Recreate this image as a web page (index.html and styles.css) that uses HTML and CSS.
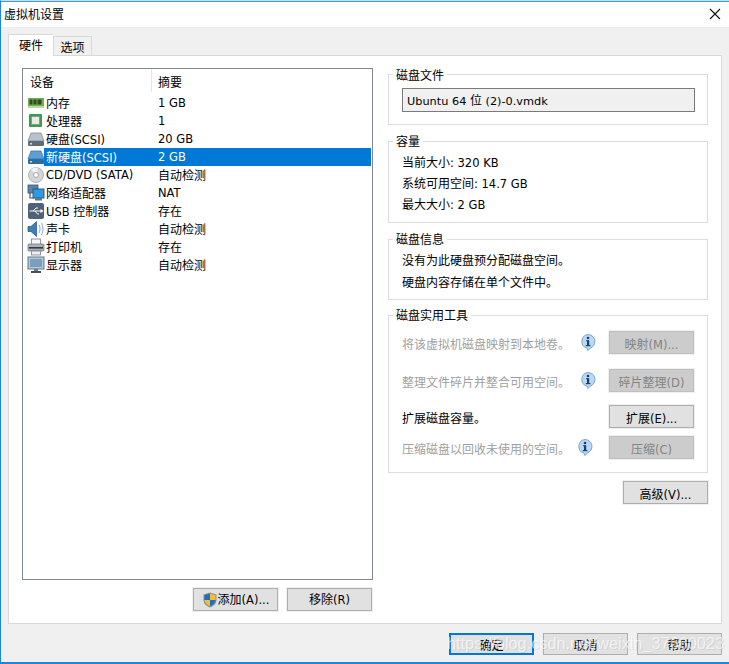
FILE: index.html
```html
<!DOCTYPE html>
<html lang="zh-CN">
<head>
<meta charset="utf-8">
<title>虚拟机设置</title>
<link rel="stylesheet" href="styles.css">
</head>
<body>
<div class="window">
  <div class="titlebar">
    <span class="title">虚拟机设置</span>
    <svg class="close" width="12" height="12" viewBox="0 0 12 12"><path d="M1 1l10 10M11 1L1 11" stroke="#111" stroke-width="1.1" fill="none"/></svg>
  </div>
  <div class="tabs">
    <div class="tab tab-active">硬件</div>
    <div class="tab">选项</div>
  </div>
  <div class="panel">
    <div class="left">
      <div class="list">
        <div class="list-head">
          <div class="col-a">设备</div>
          <div class="col-b">摘要</div>
        </div>
        <div class="row">
          <svg class="ico" width="18" height="18" viewBox="0 0 18 18"><rect x="1" y="4" width="16" height="9" fill="#6fb04a"/><rect x="1" y="12" width="16" height="2" fill="#b9d9a2"/><rect x="2.500" y="5.500" width="3" height="5" fill="#33472c"/><rect x="6.500" y="5.500" width="3" height="5" fill="#33472c"/><rect x="10.500" y="5.500" width="4" height="5" fill="#33472c"/></svg>
          <span class="name">内存</span><span class="val lat">1 GB</span>
        </div>
        <div class="row">
          <svg class="ico" width="18" height="18" viewBox="0 0 18 18"><rect x="2" y="2" width="13" height="13" rx="1" fill="#3f9a4f"/><rect x="4.500" y="4.500" width="8" height="8" fill="#e8ebe4" stroke="#7a8a7a" stroke-width=".6"/></svg>
          <span class="name">处理器</span><span class="val lat">1</span>
        </div>
        <div class="row">
          <svg class="ico" width="18" height="18" viewBox="0 0 18 18"><path d="M4 3h10l3 8H1z" fill="#b9c2ca" stroke="#76818c" stroke-width=".7"/><rect x="1" y="11" width="16" height="5" rx="1" fill="#5f6c78"/><rect x="3" y="13" width="2" height="1.500" fill="#cfe0ea"/></svg>
          <span class="name">硬盘<span class="lat">(SCSI)</span></span><span class="val lat">20 GB</span>
        </div>
        <div class="row row-selected">
          <svg class="ico" width="18" height="18" viewBox="0 0 18 18"><path d="M4 3h10l3 8H1z" fill="#5c9fd6" stroke="#2f6f9f" stroke-width=".7"/><rect x="1" y="11" width="16" height="5" rx="1" fill="#2d6c9c"/><rect x="3" y="13" width="2" height="1.500" fill="#bcd9ec"/></svg>
          <span class="name">新硬盘<span class="lat">(SCSI)</span></span><span class="val lat">2 GB</span>
        </div>
        <div class="row">
          <svg class="ico" width="18" height="18" viewBox="0 0 18 18"><circle cx="9" cy="9" r="7.500" fill="#d4d6d8" stroke="#a2a6aa" stroke-width=".8"/><path d="M9 9L4 3.500A7.500 7.500 0 0 1 11 1.800z" fill="#f2f3f4"/><circle cx="9" cy="9" r="2.500" fill="#fff" stroke="#8f9498" stroke-width=".8"/></svg>
          <span class="name lat">CD/DVD (SATA)</span><span class="val">自动检测</span>
        </div>
        <div class="row">
          <svg class="ico" width="18" height="18" viewBox="0 0 18 18"><rect x="1" y="1" width="10" height="8" fill="#5d82a8" stroke="#33587f" stroke-width=".8"/><path d="M3 9v5h4" fill="none" stroke="#33587f" stroke-width="1.200"/><rect x="6" y="5" width="11" height="9" fill="#2e9be0" stroke="#2d4f75" stroke-width=".9"/><rect x="8" y="14" width="7" height="2.500" fill="#5f7890"/></svg>
          <span class="name">网络适配器</span><span class="val lat">NAT</span>
        </div>
        <div class="row">
          <svg class="ico" width="18" height="18" viewBox="0 0 18 18"><rect x="1" y="1" width="16" height="16" rx="2" fill="#4f6378"/><path d="M2.500 9h13M6 9l3-3h2M8 9l2.500 3H12" fill="none" stroke="#fff" stroke-width="1"/><path d="M13.500 7l3 2-3 2z" fill="#fff"/></svg>
          <span class="name"><span class="lat">USB </span>控制器</span><span class="val">存在</span>
        </div>
        <div class="row">
          <svg class="ico" width="18" height="18" viewBox="0 0 18 18"><path d="M1 6.500h3L9.500 1.500v15L4 11.500H1z" fill="#3f7fb5" stroke="#1f4f7c" stroke-width=".7"/><path d="M12 5q2 4 0 8M14.500 3q3 6 0 12" fill="none" stroke="#9db8cf" stroke-width="1.200"/></svg>
          <span class="name">声卡</span><span class="val">自动检测</span>
        </div>
        <div class="row">
          <svg class="ico" width="18" height="18" viewBox="0 0 18 18"><rect x="4.500" y="1" width="9" height="6" fill="#f5f5f5" stroke="#7b8188" stroke-width=".8"/><rect x="1" y="6" width="16" height="7" rx="1" fill="#aab1b8" stroke="#6a7178" stroke-width=".7"/><rect x="2" y="9" width="14" height="1.600" fill="#333a40"/><rect x="15" y="7" width="1.500" height="1.500" fill="#5fc24f"/><rect x="4.500" y="13" width="9" height="4" fill="#eee" stroke="#7b8188" stroke-width=".8"/></svg>
          <span class="name">打印机</span><span class="val">存在</span>
        </div>
        <div class="row">
          <svg class="ico" width="18" height="18" viewBox="0 0 18 18"><rect x="1" y="1" width="16" height="12" fill="#b6c9d8" stroke="#56697c" stroke-width=".9"/><rect x="3" y="3" width="12" height="8" fill="#7d9fbe"/><rect x="7" y="13" width="4" height="2" fill="#6d7d8c"/><rect x="4" y="15" width="10" height="2" fill="#41505e"/></svg>
          <span class="name">显示器</span><span class="val">自动检测</span>
        </div>
      </div>
      <div class="left-actions">
        <button class="btn btn-add">
          <svg class="shield" width="16" height="16" viewBox="0 0 16 16"><path d="M8 .5l6.500 2v5.500c0 3.800-3 6.200-6.500 7.500C4.500 14.200 1.500 11.800 1.500 8V2.500z" fill="#8a8f96"/><path d="M8 1.500V8H2.500V3.200z" fill="#1b6fc7"/><path d="M8 1.500l5.500 1.700V8H8z" fill="#f3bd2e"/><path d="M8 8h5.500c-.2 3-2.700 5.100-5.500 6.300z" fill="#1b6fc7"/><path d="M8 8v6.300C5.200 13.100 2.700 11 2.500 8z" fill="#f3bd2e"/></svg><span>添加<span class="lat">(A)...</span></span>
        </button>
        <button class="btn">移除<span class="lat">(R)</span></button>
      </div>
    </div>
    <div class="right">
      <fieldset class="group group-file">
        <legend>磁盘文件</legend>
        <div class="file-field"><span class="lat lat-tight">Ubuntu 64 </span>位<span class="lat lat-tight"> (2)-0.vmdk</span></div>
      </fieldset>
      <fieldset class="group group-capacity">
        <legend>容量</legend>
        <div class="line-21">当前大小<span class="lat">: 320 KB</span></div>
        <div class="line-21">系统可用空间<span class="lat">: 14.7 GB</span></div>
        <div class="line-21">最大大小<span class="lat">: 2 GB</span></div>
      </fieldset>
      <fieldset class="group group-info">
        <legend>磁盘信息</legend>
        <div class="line-22">没有为此硬盘预分配磁盘空间。</div>
        <div class="line-22">硬盘内容存储在单个文件中。</div>
      </fieldset>
      <fieldset class="group group-tools">
        <legend>磁盘实用工具</legend>
        <div class="tool tool-1 is-disabled">
          <span class="tool-text">将该虚拟机磁盘映射到本地卷。</span>
          <svg class="info" width="18" height="18" viewBox="0 0 18 18"><path d="M9 1.500a7 7 0 0 1 2 13.700L9 17.500l-1-2.300A7 7 0 0 1 9 1.500z" fill="#bcd8f0" stroke="#6d9cc8" stroke-width=".9"/><rect x="8" y="7.500" width="2.200" height="5" fill="#17407a"/><rect x="6.800" y="12" width="4.600" height="1.200" fill="#17407a"/><rect x="7" y="7.300" width="3" height="1" fill="#17407a"/><circle cx="9" cy="5" r="1.300" fill="#17407a"/></svg>
          <button class="btn btn-off">映射<span class="lat">(M)...</span></button>
        </div>
        <div class="tool tool-2 is-disabled">
          <span class="tool-text">整理文件碎片并整合可用空间。</span>
          <svg class="info" width="18" height="18" viewBox="0 0 18 18"><path d="M9 1.500a7 7 0 0 1 2 13.700L9 17.500l-1-2.300A7 7 0 0 1 9 1.500z" fill="#bcd8f0" stroke="#6d9cc8" stroke-width=".9"/><rect x="8" y="7.500" width="2.200" height="5" fill="#17407a"/><rect x="6.800" y="12" width="4.600" height="1.200" fill="#17407a"/><rect x="7" y="7.300" width="3" height="1" fill="#17407a"/><circle cx="9" cy="5" r="1.300" fill="#17407a"/></svg>
          <button class="btn btn-off">碎片整理<span class="lat">(D)</span></button>
        </div>
        <div class="tool tool-3">
          <span class="tool-text">扩展磁盘容量。</span>
          <button class="btn">扩展<span class="lat">(E)...</span></button>
        </div>
        <div class="tool tool-4 is-disabled">
          <span class="tool-text">压缩磁盘以回收未使用的空间。</span>
          <svg class="info info-last" width="18" height="18" viewBox="0 0 18 18"><path d="M9 1.500a7 7 0 0 1 2 13.700L9 17.500l-1-2.300A7 7 0 0 1 9 1.500z" fill="#bcd8f0" stroke="#6d9cc8" stroke-width=".9"/><rect x="8" y="7.500" width="2.200" height="5" fill="#17407a"/><rect x="6.800" y="12" width="4.600" height="1.200" fill="#17407a"/><rect x="7" y="7.300" width="3" height="1" fill="#17407a"/><circle cx="9" cy="5" r="1.300" fill="#17407a"/></svg>
          <button class="btn btn-off">压缩<span class="lat">(C)</span></button>
        </div>
      </fieldset>
      <div class="advanced"><button class="btn">高级<span class="lat">(V)...</span></button></div>
    </div>
  </div>
  <div class="footer">
    <button class="btn btn-default">确定</button>
    <button class="btn">取消</button>
    <button class="btn">帮助</button>
  </div>
  <div class="watermark">https://blog.csdn.net/weixin_37660023</div>
</div>
</body>
</html>
```

FILE: styles.css
```css
* { box-sizing: border-box; }
html, body { margin: 0; padding: 0; background: #f0f0f0; }
body {
  width: 729px;
  height: 664px;
  overflow: hidden;
  font-family: "Noto Sans CJK SC", "Noto Sans", sans-serif;
  font-size: 12px;
  color: #000;
}
.lat { font-family: "DejaVu Sans", sans-serif; font-size: 11.500px; }
.lat-tight { font-size: 11.300px; }
.window {
  position: relative;
  width: 729px;
  height: 664px;
  display: flex;
  flex-direction: column;
  background: #f0f0f0;
  border-left: 1px solid #1a86dc;
  border-top: 1px solid #d8d8d8;
  border-bottom: 2px solid #1a86dc;
}
.titlebar {
  height: 26px;
  flex: none;
  display: flex;
  align-items: center;
  justify-content: space-between;
  padding: 0 8px 2px 3px;
  background: #fff;
  border-top: 1px solid #3a9be4;
}
.title { font-size: 12px; line-height: 16px; }
.tabs {
  display: flex;
  flex: none;
  align-items: flex-end;
  height: 28px;
  padding-left: 7px;
}
.tab {
  width: 39px;
  height: 19px;
  text-align: center;
  line-height: 20px;
  background: #f0f0f0;
  border: 1px solid #d9d9d9;
  border-bottom: 0;
}
.tab-active {
  position: relative;
  z-index: 1;
  width: 45px;
  height: 22px;
  line-height: 20px;
  margin-bottom: -1px;
  background: #fff;
  border-right: 0;
}
.panel {
  margin: 0 7px;
  height: 569px;
  flex: none;
  display: flex;
  gap: 15px;
  padding: 12px 12px 0 13px;
  background: #fff;
  border: 1px solid #d9d9d9;
}
.left { width: 351px; flex: none; display: flex; flex-direction: column; }
.list {
  height: 512px;
  flex: none;
  padding: 0 1px;
  background: #fff;
  border: 1px solid #828790;
}
.list-head { display: flex; height: 25px; line-height: 26px; }
.col-a { width: 128px; padding-left: 6px; border-right: 1px solid #e3e3e3; height: 23px; }
.col-b { padding-left: 6px; height: 23px; }
.row {
  display: flex;
  align-items: center;
  height: 18px;
  line-height: 18px;
}
.ico { flex: none; width: 18px; height: 18px; margin-left: 3px; }
.name { width: 113px; margin-left: 1px; white-space: nowrap; flex: none; }
.val { margin-left: -1px; white-space: nowrap; }
.row-selected .name, .row-selected .val { color: #fff; }
.row-selected { background: linear-gradient(90deg, #fff 0, #fff 20px, #0078d7 20px); }
.left-actions {
  display: flex;
  justify-content: flex-end;
  gap: 9px;
  margin-top: 8px;
  padding-right: 1px;
}
.btn {
  width: 85px;
  height: 23px;
  padding: 0;
  font: inherit;
  line-height: 19px;
  color: #000;
  background: #e1e1e1;
  border: 1px solid #adadad;
  outline: 1px solid #f0f0f0;
  flex: none;
}
.right .btn { padding-top: 2px; }
.btn-add { display: flex; align-items: center; justify-content: center; }
.shield { flex: none; }
.btn-off { background: #cccccc; border-color: #bfbfbf; color: #838383; }
.btn-default { border: 2px solid #0078d7; line-height: 17px; }
.right { width: 320px; flex: none; display: flex; flex-direction: column; }
.group {
  margin: 0 0 9px;
  padding: 0 12px 0 13px;
  min-width: 0;
  border: 1px solid #dcdcdc;
}
.group legend {
  padding: 0 3px;
  margin-left: -9px;
  font-size: 12px;
  line-height: 14px;
  height: 14px;
}
.group-file { padding-top: 8px; padding-bottom: 12px; }
.group-file legend { height: 12px; }
.file-field {
  height: 24px;
  line-height: 21px;
  padding-left: 4px;
  background: #f0f0f0;
  border: 1px solid #7a7a7a;
}
.group-capacity { padding-top: 3px; padding-bottom: 8px; }
.line-21 { height: 21px; line-height: 21px; }
.group-info { padding-top: 3px; padding-bottom: 6px; margin-bottom: 8px; }
.line-22 { height: 22px; line-height: 22px; }
.group-tools { padding-top: 9px; padding-bottom: 13px; margin-bottom: 8px; }
.tool { display: flex; align-items: flex-start; height: 23px; padding-right: 1px; }
.tool-1 { height: 38px; }
.tool-2 { height: 36px; }
.tool-3 { height: 31px; }
.tool-text { flex: 1; height: 24px; padding-top: 1px; line-height: 23px; white-space: nowrap; }
.is-disabled .tool-text { color: #a0a0a0; }
.info { flex: none; margin: 2px 12px 0 0; }
.info-last { margin: 2px 15px 0 0; }
.advanced { display: flex; justify-content: flex-end; }
.footer {
  display: flex;
  flex: none;
  justify-content: flex-end;
  gap: 9px;
  padding: 9px 7px 0 0;
}
.footer .btn { height: 22px; padding-top: 1px; }
.watermark {
  position: absolute;
  left: 446px;
  top: 631px;
  font-family: "Liberation Sans", sans-serif;
  font-size: 16.300px;
  line-height: 22px;
  color: rgba(255, 255, 255, .65);
  text-shadow: 1px 1px 0 rgba(130, 130, 130, .18);
  white-space: nowrap;
  pointer-events: none;
}
```
